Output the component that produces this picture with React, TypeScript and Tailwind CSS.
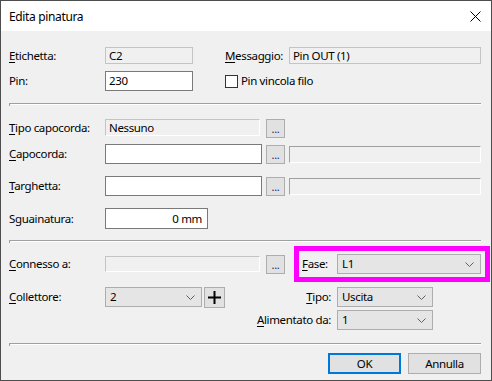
import React from 'react'

const font = { fontFamily: '"Noto Sans", "Segoe UI", sans-serif' }

// access-key label: first letter underlined
const Lbl = ({ text, u = true }: { text: string; u?: boolean }) => (
  <span>
    {u ? <span className="underline underline-offset-2">{text[0]}</span> : text[0]}
    {text.slice(1)}
  </span>
)

const Dots = ({ className = '' }: { className?: string }) => (
  <div
    className={`w-[19px] h-[19px] shrink-0 bg-[#e1e1e1] border border-[#adadad] flex items-end justify-center pb-[3px] text-[11px] leading-none text-[#1a1a6a] ${className}`}
  >
    ...
  </div>
)

const Chevron = () => (
  <svg width="9" height="5" viewBox="0 0 9 5" className="shrink-0">
    <path d="M0.5 0.5 L4.5 4.5 L8.5 0.5" fill="none" stroke="#606060" strokeWidth="1" />
  </svg>
)

const Combo = ({ value, w }: { value: string; w: string }) => (
  <div
    className={`${w} h-[20px] shrink-0 bg-[#e5e5e5] border border-[#adadad] flex items-center justify-between pl-[4px] pr-[6px]`}
  >
    <span>{value}</span>
    <Chevron />
  </div>
)

const Separator = ({ className = '' }: { className?: string }) => (
  <div className={`w-[472px] h-[3px] border-t border-l border-[#a0a0a0] relative ${className}`}>
    <div className="h-px bg-white ml-px" />
  </div>
)

export default function App() {
  return (
    <div
      style={font}
      className="w-[492px] h-[381px] border border-[#4d4d4d] bg-[#f0f0f0] text-[11.5px] tracking-[-0.35px] text-black overflow-hidden"
    >
      {/* title bar */}
      <div className="h-[30px] bg-white flex items-center justify-between pl-[8px] pr-[10px]">
        <span className="text-[12px] pt-[1px]">Edita pinatura</span>
        <svg width="11" height="11" viewBox="0 0 11 11">
          <path d="M0.5 0.5 L10.5 10.5 M10.5 0.5 L0.5 10.5" stroke="#000" strokeWidth="1" />
        </svg>
      </div>

      <div className="pl-[8px] flex flex-col">
        {/* Etichetta / Messaggio */}
        <div className="mt-[16px] h-[17px] flex items-center">
          <div className="w-[96px]"><Lbl text="Etichetta:" /></div>
          <div className="w-[88px] h-[17px] border border-[#c4c4c4] bg-[#f0f0f0] pl-[3px] flex items-center">C2</div>
          <div className="ml-[32px] w-[64px]"><Lbl text="Messaggio:" /></div>
          <div className="w-[192px] h-[17px] border border-[#c4c4c4] bg-[#f0f0f0] pl-[3px] flex items-center">Pin OUT (1)</div>
        </div>

        {/* Pin */}
        <div className="mt-[7px] h-[20px] flex items-center">
          <div className="w-[96px]">Pin:</div>
          <div className="w-[88px] h-[20px] border border-[#7a7a7a] bg-white pl-[3px] flex items-center">230</div>
          <div className="ml-[32px] w-[13px] h-[13px] border border-[#333] bg-white" />
          <span className="ml-[3px]">Pin vincola filo</span>
        </div>

        <Separator className="mt-[12px]" />

        {/* Tipo capocorda */}
        <div className="mt-[13px] h-[19px] flex items-start">
          <div className="w-[96px] h-[17px] flex items-center"><Lbl text="Tipo capocorda:" /></div>
          <div className="w-[155px] h-[17px] border border-[#c4c4c4] border-b-white border-r-white pl-[3px] flex items-center">Nessuno</div>
          <Dots className="ml-[6px]" />
        </div>

        {/* Capocorda */}
        <div className="mt-[6px] h-[20px] flex items-center">
          <div className="w-[96px]"><Lbl text="Capocorda:" /></div>
          <div className="w-[157px] h-[20px] border border-[#7a7a7a] bg-white" />
          <Dots className="ml-[4px]" />
          <div className="ml-[4px] w-[192px] h-[17px] border border-[#a0a0a0] border-b-white border-r-white" />
        </div>

        {/* Targhetta */}
        <div className="mt-[12px] h-[20px] flex items-center">
          <div className="w-[96px]"><Lbl text="Targhetta:" /></div>
          <div className="w-[157px] h-[20px] border border-[#7a7a7a] bg-white" />
          <Dots className="ml-[4px]" />
          <div className="ml-[4px] w-[192px] h-[17px] border border-[#a0a0a0] border-b-white border-r-white" />
        </div>

        {/* Sguainatura */}
        <div className="mt-[12px] h-[21px] flex items-center">
          <div className="w-[96px]">Sguainatura:</div>
          <div className="w-[103px] h-[21px] border border-[#7a7a7a] bg-white pr-[5px] flex items-center justify-end">0 mm</div>
        </div>

        <Separator className="mt-[11px]" />

        {/* Connesso a + Fase */}
        <div className="mt-[3px] h-[36px] flex items-center">
          <div className="w-[96px]"><Lbl text="Connesso a:" /></div>
          <div className="w-[155px] h-[16px] border border-[#c4c4c4] border-b-white border-r-white" />
          <Dots className="ml-[6px]" />
          <div className="ml-[9px] w-[196px] h-[36px] border-[5px] border-[#ff00ff] flex items-center pl-[3px]">
            <div className="w-[35px]"><Lbl text="Fase:" /></div>
            <Combo value="L1" w="w-[144px]" />
          </div>
        </div>

        {/* Collettore + Tipo */}
        <div className="mt-[5px] h-[20px] flex items-center">
          <div className="w-[96px]"><Lbl text="Collettore:" /></div>
          <Combo value="2" w="w-[97px]" />
          <div className="ml-[2px] w-[21px] h-[21px] bg-[#e1e1e1] border border-[#adadad] flex items-center justify-center">
            <svg width="13" height="13" viewBox="0 0 13 13">
              <path d="M6.5 0 V13 M0 6.5 H13" stroke="#000" strokeWidth="2" />
            </svg>
          </div>
          <div className="w-[106px] text-right"><Lbl text="Tipo:" /></div>
          <Combo value="Uscita" w="ml-[6px] w-[96px]" />
        </div>

        {/* Alimentato da */}
        <div className="mt-[3px] h-[20px] flex items-center">
          <div className="w-[322px] text-right"><Lbl text="Alimentato da:" /></div>
          <Combo value="1" w="ml-[6px] w-[96px]" />
        </div>

        <Separator className="mt-[13px]" />

        {/* buttons */}
        <div className="mt-[7px] w-[472px] flex justify-end gap-[7px]">
          <div className="w-[73px] h-[21px] bg-[#e1e1e1] border-2 border-[#0078d7] flex items-center justify-center">OK</div>
          <div className="w-[73px] h-[21px] bg-[#e1e1e1] border border-[#adadad] flex items-center justify-center">Annulla</div>
        </div>
      </div>
    </div>
  )
}
